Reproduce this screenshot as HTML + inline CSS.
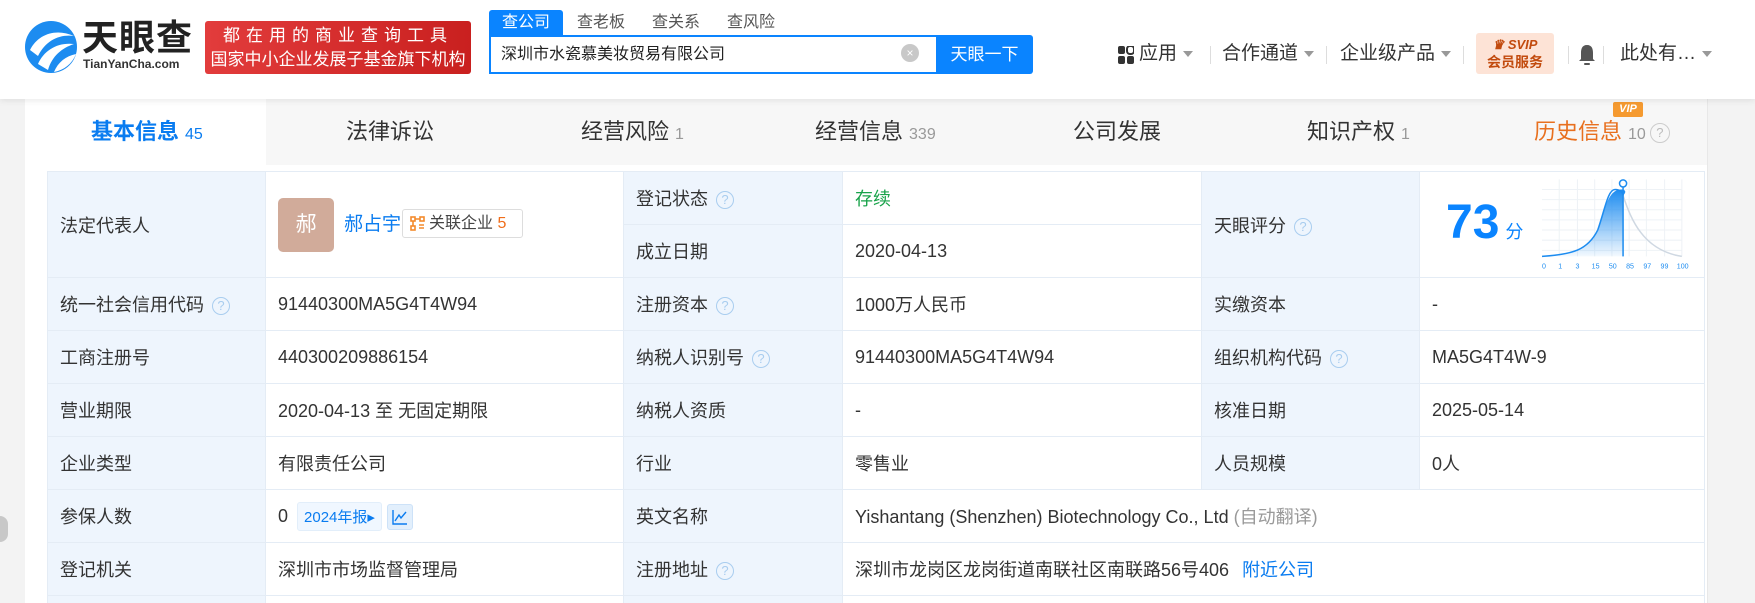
<!DOCTYPE html>
<html style="width:1755px;height:603px;overflow:hidden"><head><meta charset="utf-8">
<style>
*{margin:0;padding:0;box-sizing:border-box}
body{width:1755px;height:603px;overflow:hidden;background:#f3f3f3;font-family:"Liberation Sans","Noto Sans CJK SC",sans-serif;color:#333;position:relative}
.abs{position:absolute}
#hdr{position:absolute;left:0;top:0;width:1755px;height:99px;background:#fff;box-shadow:0 2px 6px rgba(0,0,0,.08);z-index:2}
.red{left:205px;top:21px;width:266px;height:53px;background:linear-gradient(90deg,#e23c3c,#c9201f);border-radius:3px;color:#fff;font-size:17px;line-height:24px;text-align:center;padding-top:3px}
.tab{top:10px;height:25px;font-size:16px;line-height:25px;color:#555;text-align:center}
.nav{top:42px;font-size:19px;color:#333;line-height:24px}
.caret{display:inline-block;border:5px solid transparent;border-top:6px solid #999;vertical-align:middle;margin-left:6px;margin-top:5px}
.sep{top:46px;width:1px;height:18px;background:#ddd}
#cont{position:absolute;left:25px;top:99px;width:1682px;height:504px;background:#fff}
#tabs{position:absolute;left:25px;top:99px;width:1682px;height:66px;background:#f7f7f7}
.t{top:99px;height:66px;line-height:66px;font-size:22px;color:#333}
.t small{font-size:16px;color:#999;margin-left:6px}
table{position:absolute;left:47px;top:171px;border-collapse:collapse;font-size:18px;table-layout:fixed}
td{border:1px solid #e4ecf5;padding:0 0 0 12px;height:53px;color:#333;vertical-align:middle}
td.l{background:#eef5fd}
tr.last td{height:8px;border-bottom:none}
.q{display:inline-block;width:18px;height:18px;border:1.5px solid #a9cdef;border-radius:50%;color:#a9cdef;font-size:13px;line-height:15px;text-align:center;vertical-align:middle;margin-left:8px}
.blue{color:#0a7cf0}
</style></head><body>
<div id="hdr">
 <svg class="abs" style="left:24px;top:20px" width="54" height="54" viewBox="0 0 54 54">
  <circle cx="27" cy="27" r="26" fill="#1d8cf0"/>
  <path d="M6 30 C14 14 32 8 50 16 C36 14 22 20 14 36 Z" fill="#fff"/>
  <path d="M14 44 C20 30 34 22 50 24 C38 28 28 36 24 50 Z" fill="#fff"/>
  <path d="M30 52 C34 42 42 36 52 34 C48 44 40 50 30 52Z" fill="#fff"/>
 </svg>
 <div class="abs" style="left:82px;top:18px;font-size:36px;font-weight:bold;color:#222;letter-spacing:1px;line-height:40px">天眼查</div>
 <div class="abs" style="left:83px;top:57px;font-size:12px;color:#333;font-weight:bold">TianYanCha.com</div>
 <div class="abs red"><div style="letter-spacing:6px">都在用的商业查询工具</div><div>国家中小企业发展子基金旗下机构</div></div>
 <div class="abs tab" style="left:489px;width:74px;background:#0a84ff;color:#fff;border-radius:3px 3px 0 0">查公司</div>
 <div class="abs tab" style="left:573px;width:56px">查老板</div>
 <div class="abs tab" style="left:648px;width:56px">查关系</div>
 <div class="abs tab" style="left:723px;width:56px">查风险</div>
 <div class="abs" style="left:489px;top:35px;width:447px;height:39px;border:2px solid #0a84ff;border-right:none;background:#fff;font-size:16px;line-height:35px;padding-left:10px;color:#222">深圳市水瓷慕美妆贸易有限公司</div>
 <div class="abs" style="left:901px;top:44px;width:18px;height:18px;border-radius:50%;background:#c8c8c8;color:#fff;font-size:12px;line-height:18px;text-align:center">×</div>
 <div class="abs" style="left:936px;top:35px;width:97px;height:39px;background:#0a84ff;color:#fff;font-size:17px;line-height:39px;text-align:center;border-radius:0 3px 3px 0">天眼一下</div>
 <svg class="abs" style="left:1118px;top:46px" width="16" height="18" viewBox="0 0 16 18"><rect x="0" y="0" width="7" height="8" rx="2" fill="#333"/><rect x="9" y="0" width="7" height="8" rx="3" fill="none" stroke="#333" stroke-width="2"/><rect x="0" y="10" width="7" height="8" rx="2" fill="#333"/><rect x="9" y="10" width="7" height="8" rx="2" fill="#333"/></svg>
 <div class="abs nav" style="left:1139px">应用<span class="caret"></span></div>
 <div class="abs sep" style="left:1210px"></div>
 <div class="abs nav" style="left:1222px">合作通道<span class="caret"></span></div>
 <div class="abs sep" style="left:1326px"></div>
 <div class="abs nav" style="left:1340px">企业级产品<span class="caret"></span></div>
 <div class="abs sep" style="left:1463px"></div>
 <div class="abs" style="left:1476px;top:33px;width:78px;height:41px;background:#fde3d6;border-radius:3px;text-align:center;color:#c24a0d;font-weight:bold">
  <div style="font-size:13px;line-height:17px;margin-top:3px;font-style:italic">♛ SVIP</div>
  <div style="font-size:14px;line-height:18px">会员服务</div></div>
 <div class="abs sep" style="left:1568px"></div>
 <svg class="abs" style="left:1578px;top:44px" width="18" height="22" viewBox="0 0 18 22"><path d="M9 1 C4 1 3 5 3 9 L3 15 L1 17 L17 17 L15 15 L15 9 C15 5 14 1 9 1Z" fill="#555"/><rect x="6" y="19" width="6" height="2" rx="1" fill="#555"/></svg>
 <div class="abs sep" style="left:1603px"></div>
 <div class="abs nav" style="left:1620px">此处有…<span class="caret"></span></div>
</div>
<div id="cont"></div>
<div id="tabs"></div>
<div class="abs" style="left:25px;top:99px;width:241px;height:66px;background:#fff"></div>
<div class="abs" style="left:1707px;top:99px;width:1px;height:504px;background:#e8e8e8"></div>
<div class="abs t" style="left:91px;color:#0a7cf0;font-weight:bold">基本信息<small style="color:#0a7cf0;font-weight:normal">45</small></div>
<div class="abs t" style="left:346px">法律诉讼</div>
<div class="abs t" style="left:581px">经营风险<small>1</small></div>
<div class="abs t" style="left:815px">经营信息<small>339</small></div>
<div class="abs t" style="left:1073px">公司发展</div>
<div class="abs t" style="left:1307px">知识产权<small>1</small></div>
<div class="abs t" style="left:1534px;color:#e8701f">历史信息<small>10</small><span class="q" style="border-color:#ccc;color:#bbb;width:20px;height:20px;line-height:17px;margin-left:4px">?</span></div>
<div class="abs" style="left:1613px;top:102px;width:30px;height:15px;background:#f59a30;color:#fff;font-size:11px;font-weight:bold;font-style:italic;text-align:center;line-height:15px;border-radius:2px">VIP</div>
<div class="abs" style="left:0;top:0;width:1755px;height:603px;overflow:hidden;pointer-events:none">
<table>
<colgroup><col style="width:218px"><col style="width:358px"><col style="width:219px"><col style="width:359px"><col style="width:218px"><col style="width:285px"></colgroup>
<tr><td class="l" rowspan="2" style="height:106px">法定代表人</td>
<td rowspan="2"><div style="position:relative;height:60px">
 <div class="abs" style="left:0;top:3px;width:56px;height:54px;background:#d1ab9a;border-radius:5px;color:#fff;font-size:21px;line-height:54px;text-align:center">郝</div>
 <div class="abs blue" style="left:66px;top:14px;font-size:19px">郝占宇</div>
 <div class="abs" style="left:124px;top:14px;width:121px;height:29px;border:1px solid #ddd;border-radius:3px;font-size:16px;line-height:27px;padding-left:26px;color:#444">关联企业 <span style="color:#f06d1a">5</span>
  <svg class="abs" style="left:7px;top:6px" width="15" height="15" viewBox="0 0 15 15" fill="none" stroke="#f38a2c" stroke-width="1.6"><rect x="1" y="1" width="4" height="4"/><rect x="10" y="1" width="4" height="4"/><rect x="1" y="10" width="4" height="4"/><path d="M5 3h5M3 5v5M9 9h5M9 12h5"/></svg></div>
</div></td>
<td class="l" style="height:53px">登记状态<span class="q">?</span></td><td style="color:#19a34a">存续</td>
<td class="l" rowspan="2">天眼评分<span class="q">?</span></td>
<td rowspan="2" style="position:relative"><div style="position:relative;height:100px">
 <div class="abs" style="left:14px;top:20px;font-size:48px;font-weight:bold;color:#0a84ff;line-height:56px">73<span style="font-size:18px;font-weight:normal;margin-left:6px">分</span></div>
 <svg class="abs" style="left:110px;top:4px" width="152" height="94" viewBox="0 0 150 92">
  <g stroke="#eef2f6" stroke-width="1"><path d="M0 10H138M0 20H138M0 30H138M0 40H138M0 50H138M0 60H138M0 70H138M17 0V76M35 0V76M52 0V76M69 0V76M86 0V76M103 0V76M121 0V76M138 0V76"/></g>
  <defs><linearGradient id="g" x1="0" y1="0" x2="0" y2="1"><stop offset="0" stop-color="#1d8cf0"/><stop offset="1" stop-color="#1d8cf0" stop-opacity=".05"/></linearGradient></defs>
  <path d="M0 76 C30 74 45 70 55 50 C62 30 65 10 78 10 C82 10 84 12 80 16 L80 76Z" fill="url(#g)"/>
  <path d="M0 76 C30 74 45 70 55 50 C62 30 65 10 72 10 C78 10 80 14 80 16" fill="none" stroke="#1d8cf0" stroke-width="1.5"/>
  <path d="M80 16 C88 40 100 70 138 76" fill="none" stroke="#cfd8e2" stroke-width="1.5"/>
  <path d="M80 6V76" stroke="#1d8cf0" stroke-width="1.5"/><circle cx="80" cy="4" r="3.5" fill="#fff" stroke="#1d8cf0" stroke-width="1.5"/>
  <g font-size="7" fill="#1d8cf0" font-family="Liberation Sans"><text x="0" y="88">0</text><text x="16" y="88">1</text><text x="33" y="88">3</text><text x="49" y="88">15</text><text x="66" y="88">50</text><text x="83" y="88">85</text><text x="100" y="88">97</text><text x="117" y="88">99</text><text x="133" y="88">100</text></g>
 </svg></div></td></tr>
<tr><td class="l">成立日期</td><td>2020-04-13</td></tr>
<tr><td class="l">统一社会信用代码<span class="q">?</span></td><td>91440300MA5G4T4W94</td><td class="l">注册资本<span class="q">?</span></td><td>1000万人民币</td><td class="l">实缴资本</td><td>-</td></tr>
<tr><td class="l">工商注册号</td><td>440300209886154</td><td class="l">纳税人识别号<span class="q">?</span></td><td>91440300MA5G4T4W94</td><td class="l">组织机构代码<span class="q">?</span></td><td>MA5G4T4W-9</td></tr>
<tr><td class="l">营业期限</td><td>2020-04-13 至 无固定期限</td><td class="l">纳税人资质</td><td>-</td><td class="l">核准日期</td><td>2025-05-14</td></tr>
<tr><td class="l">企业类型</td><td>有限责任公司</td><td class="l">行业</td><td>零售业</td><td class="l">人员规模</td><td>0人</td></tr>
<tr><td class="l">参保人数</td><td>0 <span style="display:inline-block;background:#f0f7ff;border:1px solid #e2eefa;border-radius:3px;color:#0a7cf0;font-size:15px;padding:3px 6px;margin-left:4px">2024年报▸</span> <span style="display:inline-block;width:26px;height:26px;background:#e2effc;border:1px solid #cde2f8;border-radius:3px;vertical-align:middle;text-align:center"><svg width="16" height="16" viewBox="0 0 16 16" style="margin-top:4px" fill="none" stroke="#0a7cf0" stroke-width="1.4"><path d="M1 1V15H15M3 12L7 6L9 9L14 3"/></svg></span></td><td class="l">英文名称</td><td colspan="3">Yishantang (Shenzhen) Biotechnology Co., Ltd <span style="color:#999">(自动翻译)</span></td></tr>
<tr><td class="l">登记机关</td><td>深圳市市场监督管理局</td><td class="l">注册地址<span class="q">?</span></td><td colspan="3">深圳市龙岗区龙岗街道南联社区南联路56号406 <span class="blue" style="margin-left:8px">附近公司</span></td></tr>
<tr class="last"><td class="l"></td><td></td><td class="l"></td><td colspan="3"></td></tr>
</table>
</div>
<div class="abs" style="left:-8px;top:516px;width:16px;height:26px;border-radius:8px;background:#c8c8c8"></div>
</body></html>
